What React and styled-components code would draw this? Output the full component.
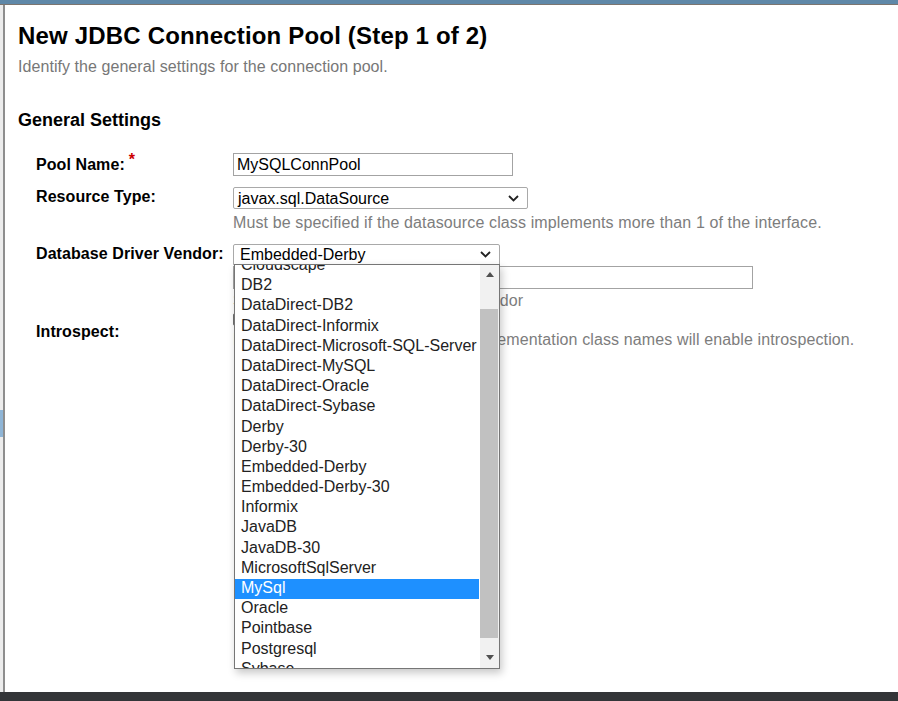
import React from "react";
import styled, { createGlobalStyle } from "styled-components";

const GlobalStyle = createGlobalStyle`
  html, body {
    margin: 0;
    padding: 0;
    background: #fff;
    font-family: "Liberation Sans", Arial, sans-serif;
  }
`;

const Page = styled.div`
  display: flex;
  flex-direction: column;
  height: 100vh;
  overflow: hidden;
`;

const TopBar = styled.div`
  height: 4px;
  background: #5f88a8;
  border-bottom: 1px solid #7c756f;
  flex-shrink: 0;
`;

const Main = styled.div`
  flex: 1;
  display: flex;
  min-height: 0;
`;

const LeftRail = styled.div`
  width: 3px;
  background: #ececec;
  display: flex;
  flex-direction: column;
`;

const RailMarker = styled.div`
  margin-top: 405px;
  height: 27px;
  background: #8fb5d6;
`;

const Divider = styled.div`
  width: 2px;
  background: #8e8e8e;
`;

const Content = styled.div`
  flex: 1;
  padding-left: 13px;
`;

const Title = styled.h1`
  margin: 17px 0 0;
  font-size: 24px;
  line-height: 28px;
  font-weight: bold;
  letter-spacing: 0.18px;
  color: #000;
`;

const Subtitle = styled.div`
  margin-top: 7px;
  font-size: 16px;
  line-height: 20px;
  letter-spacing: 0.06px;
  color: #777;
`;

const SectionTitle = styled.h2`
  margin: 32px 0 0;
  font-size: 18px;
  line-height: 22px;
  font-weight: bold;
  color: #000;
`;

const Form = styled.div`
  margin-top: 22px;
  padding-left: 18px;
  display: flex;
  flex-direction: column;
`;

const FormRow = styled.div`
  display: flex;
  margin-top: ${(p) => p.$gap || 0}px;
`;

const Label = styled.div`
  width: 197px;
  flex-shrink: 0;
  padding-top: ${(p) => p.$offset || 0}px;
  font-size: 16px;
  line-height: 20px;
  font-weight: bold;
  letter-spacing: 0.08px;
  color: #000;
`;

const Required = styled.span`
  color: #cc0000;
  font-size: 16px;
  position: relative;
  top: -5px;
  margin-left: 4px;
`;

const Field = styled.div`
  display: flex;
  flex-direction: column;
  align-items: flex-start;
`;

const TextInput = styled.div`
  box-sizing: border-box;
  width: ${(p) => p.$width}px;
  height: 23px;
  border: 1px solid #a3a3a3;
  padding: 1px 3px 0;
  font-size: 16px;
  line-height: 20px;
  color: #000;
  margin-top: ${(p) => p.$top || 0}px;
`;

const SelectWrap = styled.div`
  position: relative;
`;

const SelectBox = styled.div`
  box-sizing: border-box;
  width: ${(p) => p.$width}px;
  height: 22px;
  border: 1px solid #a9a9a9;
  border-radius: 2px;
  padding: ${(p) => p.$padTop || 0}px 8px 0 ${(p) => p.$padLeft || 4}px;
  font-size: 16px;
  line-height: 20px;
  color: #000;
  display: flex;
  justify-content: space-between;
  align-items: flex-start;
`;

const Chevron = styled.svg`
  width: 11px;
  height: 7px;
  margin-top: ${(p) => p.$top || 7}px;
  flex-shrink: 0;
`;

const Help = styled.div`
  margin-top: ${(p) => p.$top || 0}px;
  font-size: 16px;
  line-height: 20px;
  letter-spacing: 0.12px;
  color: #7d7d7d;
  white-space: nowrap;
`;

const Checkbox = styled.div`
  width: 11px;
  height: 11px;
  border: 1px solid #6f6f6f;
  border-radius: 2px;
  background: #fff;
`;

const Popup = styled.div`
  position: absolute;
  top: 20px;
  left: 1px;
  box-sizing: border-box;
  width: 266px;
  height: 405px;
  background: #fff;
  border: 1px solid #767676;
  box-shadow: 2px 4px 8px rgba(0, 0, 0, 0.22);
  display: flex;
  z-index: 10;
`;

const ListViewport = styled.div`
  flex: 1;
  overflow: hidden;
`;

const List = styled.div`
  margin-top: -9px;
`;

const Option = styled.div`
  box-sizing: border-box;
  height: 20.2px;
  padding: 0 0 2px 6px;
  font-size: 16px;
  line-height: 18px;
  white-space: nowrap;
  color: ${(p) => (p.$selected ? "#fff" : "#222")};
  background: ${(p) => (p.$selected ? "#1e90ff" : "transparent")};
`;

const ScrollBar = styled.div`
  width: 19px;
  margin-left: 1px;
  background: #f1f1f1;
  display: flex;
  flex-direction: column;
`;

const ScrollButton = styled.div`
  display: flex;
  justify-content: center;
  align-items: ${(p) => (p.$down ? "flex-start" : "flex-end")};
  padding: ${(p) => (p.$down ? "4px 0 0" : "0 0 4px")};
  box-sizing: border-box;
  height: ${(p) => (p.$down ? 17 : 16)}px;
`;

const Track = styled.div`
  flex: 1;
  display: flex;
  flex-direction: column;
  padding-right: 1px;
`;

const Thumb = styled.div`
  margin-top: 28px;
  height: 329px;
  background: #c1c1c1;
`;

const BottomBar = styled.div`
  height: 9px;
  background: #333538;
  flex-shrink: 0;
`;

const vendors = [
  "Cloudscape",
  "DB2",
  "DataDirect-DB2",
  "DataDirect-Informix",
  "DataDirect-Microsoft-SQL-Server",
  "DataDirect-MySQL",
  "DataDirect-Oracle",
  "DataDirect-Sybase",
  "Derby",
  "Derby-30",
  "Embedded-Derby",
  "Embedded-Derby-30",
  "Informix",
  "JavaDB",
  "JavaDB-30",
  "MicrosoftSqlServer",
  "MySql",
  "Oracle",
  "Pointbase",
  "Postgresql",
  "Sybase",
];

const ChevronIcon = ({ top }) => (
  <Chevron $top={top} viewBox="0 0 11 7">
    <path d="M1 1 L5.5 5.5 L10 1" fill="none" stroke="#222" strokeWidth="1.8" />
  </Chevron>
);

const Arrow = ({ down }) => (
  <svg width="8" height="5" viewBox="0 0 8 5">
    <path d={down ? "M0 0 H8 L4 5 Z" : "M0 5 H8 L4 0 Z"} fill="#505050" />
  </svg>
);

const App = () => {
  return (
    <Page>
      <GlobalStyle />
      <TopBar />
      <Main>
        <LeftRail>
          <RailMarker />
        </LeftRail>
        <Divider />
        <Content>
          <Title>New JDBC Connection Pool (Step 1 of 2)</Title>
          <Subtitle>Identify the general settings for the connection pool.</Subtitle>
          <SectionTitle>General Settings</SectionTitle>
          <Form>
            <FormRow>
              <Label $offset={2}>
                Pool Name:<Required>*</Required>
              </Label>
              <Field>
                <TextInput $width={280}>MySQLConnPool</TextInput>
              </Field>
            </FormRow>
            <FormRow $gap={11}>
              <Label>Resource Type:</Label>
              <Field>
                <SelectBox $width={295} $padTop={1} $padLeft={4}>
                  <span>javax.sql.DataSource</span>
                  <ChevronIcon top={6} />
                </SelectBox>
                <Help $top={4}>
                  Must be specified if the datasource class implements more than 1 of the interface.
                </Help>
              </Field>
            </FormRow>
            <FormRow $gap={11}>
              <Label>Database Driver Vendor:</Label>
              <Field>
                <SelectWrap>
                  <SelectBox $width={267} $padLeft={6}>
                    <span>Embedded-Derby</span>
                    <ChevronIcon top={6} />
                  </SelectBox>
                  <Popup>
                    <ListViewport>
                      <List>
                        {vendors.map((v) => (
                          <Option key={v} $selected={v === "MySql"}>
                            {v}
                          </Option>
                        ))}
                      </List>
                    </ListViewport>
                    <ScrollBar>
                      <ScrollButton>
                        <Arrow />
                      </ScrollButton>
                      <Track>
                        <Thumb />
                      </Track>
                      <ScrollButton $down>
                        <Arrow down />
                      </ScrollButton>
                    </ScrollBar>
                  </Popup>
                </SelectWrap>
                <TextInput $width={520} />
                <Help $top={2}>Select or enter a database driver vendor</Help>
              </Field>
            </FormRow>
            <FormRow $gap={2}>
              <Label $offset={9}>Introspect:</Label>
              <Field>
                <Checkbox />
                <Help $top={4}>
                  If enabled, data source or driver implementation class names will enable introspection.
                </Help>
              </Field>
            </FormRow>
          </Form>
        </Content>
      </Main>
      <BottomBar />
    </Page>
  );
};

export default App;
